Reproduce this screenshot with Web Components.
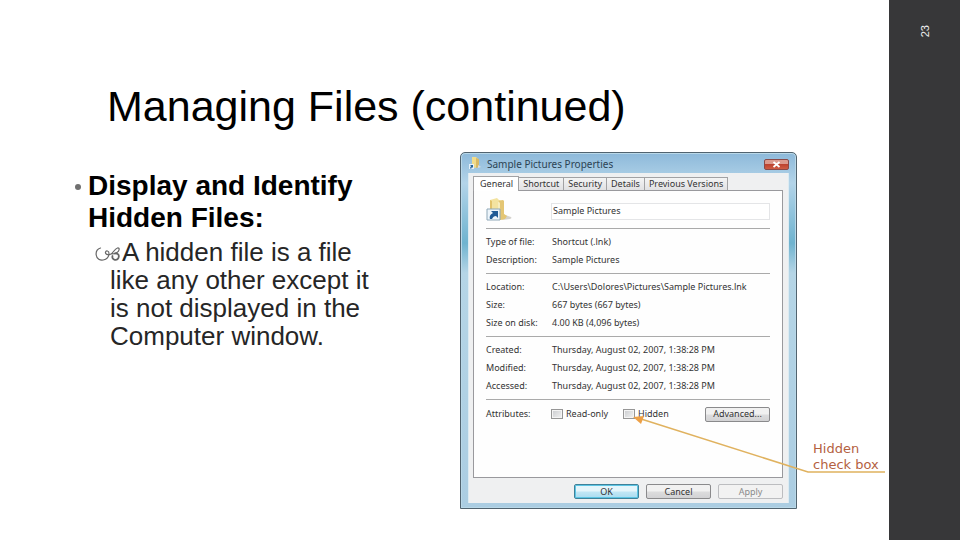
<!DOCTYPE html>
<html lang="en">
<head>
<meta charset="utf-8">
<meta name="viewport" content="width=device-width, initial-scale=1">
<title>Managing Files (continued)</title>
<style>
	body {
		margin: 0;
		background: white;
		color: black;
		font-family: "Liberation Sans", Arial, sans-serif;
	}
</style>
</head>
<body>

<slide-page number="23">
	<h1 slot="title">Managing Files (continued)</h1>
	<slide-point slot="text">
		Display and Identify Hidden Files:
		<span slot="detail">A hidden file is a file like any other except it is not displayed in the Computer window.</span>
	</slide-point>
	<callout-figure slot="figure">
		<properties-window heading="Sample Pictures Properties">
			<property-group>
				<property-row label="Type of file:">Shortcut (.lnk)</property-row>
				<property-row label="Description:">Sample Pictures</property-row>
			</property-group>
			<property-group>
				<property-row label="Location:">C:\Users\Dolores\Pictures\Sample Pictures.lnk</property-row>
				<property-row label="Size:">667 bytes (667 bytes)</property-row>
				<property-row label="Size on disk:">4.00 KB (4,096 bytes)</property-row>
			</property-group>
			<property-group>
				<property-row label="Created:">Thursday, August 02, 2007, 1:38:28 PM</property-row>
				<property-row label="Modified:">Thursday, August 02, 2007, 1:38:28 PM</property-row>
				<property-row label="Accessed:">Thursday, August 02, 2007, 1:38:28 PM</property-row>
			</property-group>
			<property-row label="Attributes:" controls>
				<check-option>Read-only</check-option>
				<check-option>Hidden</check-option>
				<win-button>Advanced...</win-button>
			</property-row>
			<win-button slot="actions" kind="default">OK</win-button>
			<win-button slot="actions">Cancel</win-button>
			<win-button slot="actions" disabled>Apply</win-button>
		</properties-window>
		<span slot="label">Hidden<br>check box</span>
	</callout-figure>
</slide-page>

<script>
const html = (strings, ...values) => String.raw(strings, ...values);

class BaseElement extends HTMLElement
{
	connectedCallback()
	{
		if (this.shadowRoot) return;
		this.attachShadow({mode: 'open'});
		this.shadowRoot.innerHTML = this.render();
	}
}

class SlidePage extends BaseElement
{
	render()
	{
		return html`
			<style>
				:host {
					display: grid;
					grid-template-columns: 1fr 71px;
					min-height: 100vh;
				}

				main {
					padding: 81px 0 31px 74px;
				}

				::slotted(h1) {
					margin: 0 0 21px 33px;
					font-size: 43px;
					font-weight: normal;
					line-height: 50px;
				}

				.columns {
					display: grid;
					grid-template-columns: 386fr 429fr;
					align-items: start;
				}

				.text {
					padding: 18px 84px 0 0;
				}

				aside {
					display: flex;
					justify-content: center;
					align-items: flex-start;
					padding-top: 25px;
					background: #373739;
					color: #eee;
					font-size: 11px;
				}

				aside span {
					writing-mode: vertical-rl;
					transform: rotate(180deg);
				}
			</style>
			<main>
				<slot name="title"></slot>
				<div class="columns">
					<div class="text"><slot name="text"></slot></div>
					<slot name="figure"></slot>
				</div>
			</main>
			<aside><span>${ this.getAttribute('number') }</span></aside>
		`;
	}
}

class SlidePoint extends BaseElement
{
	render()
	{
		return html`
			<style>
				:host {
					display: block;
				}

				.point {
					display: grid;
					grid-template-columns: 8px 1fr;
					column-gap: 6px;
					font-size: 28px;
					font-weight: bold;
					line-height: 32px;
				}

				.dot {
					width: 6px;
					height: 6px;
					margin: 14px 0 0 1px;
					border-radius: 50%;
					background: #707070;
				}

				.detail {
					padding: 4px 0 0 36px;
					color: #262626;
					font-size: 26px;
					line-height: 28px;
					text-indent: -15px;
				}

				svg {
					width: 27px;
					height: 16px;
					vertical-align: -1px;
				}
			</style>
			<div class="point">
				<div class="dot"></div>
				<div><slot></slot></div>
			</div>
			<div class="detail"><svg viewBox="0 0 27 16" fill="none" stroke="#666" stroke-width="1.2" stroke-linecap="round" aria-hidden="true">
				<path d="M5.500 2C2.500 3 .8 6 1.200 9c.5 4 4 5.600 7 5 4-.8 5.800-3.500 5.800-6.500 0-3-3-3.300-3.500-1.300-.4 2 2.300 3 4.500 2.300C18.500 7.500 19 3 22.500 2c2.500-.5 2 3-.5 4.500-1.500 1-3.500 1.500-5 1.500"/>
				<path d="M20 7.500c2.500-.3 4 1 3.800 3.200-.2 2.300-2 3.500-4 3.100-2-.4-2.800-2-2.300-3.800" stroke-width="1.800"/>
			</svg><slot name="detail"></slot></div>
		`;
	}
}

class CalloutFigure extends BaseElement
{
	render()
	{
		return html`
			<style>
				:host {
					position: relative;
					display: grid;
					grid-template-columns: 337fr 92fr;
				}

				.label {
					padding: 289px 0 0 16px;
					color: #b4613f;
					font: 13px/16px "DejaVu Sans", Verdana, sans-serif;
					white-space: nowrap;
				}

				svg {
					position: absolute;
					inset: 0;
					width: 100%;
					height: 100%;
					pointer-events: none;
				}
			</style>
			<slot></slot>
			<div class="label"><slot name="label"></slot></div>
			<svg viewBox="0 0 429 357" preserveAspectRatio="xMinYMin" aria-hidden="true">
				<path d="M178 266L348 320H425" fill="none" stroke="#e0b25f" stroke-width="1.600"/>
				<path d="M173 265l11-1-3 8z" fill="#eda046"/>
			</svg>
		`;
	}
}

class PropertiesWindow extends BaseElement
{
	render()
	{
		const tabs = ['General', 'Shortcut', 'Security', 'Details', 'Previous Versions'];
		return html`
			<style>
				:host {
					display: block;
					box-sizing: border-box;
					padding: 0 7px 5px;
					border: 1px solid #51636f;
					border-radius: 5px 5px 0 0;
					background: linear-gradient(#8db9da, #b3d4e9 30px, #6fb3cf 90px, #b5d5e6 120px, #abcde2);
					box-shadow: inset 0 0 0 1px #b9d8e8;
					color: #333;
					font: 9px/18px "Noto Sans", sans-serif;
				}

				header {
					display: flex;
					align-items: center;
					gap: 5px;
					height: 20px;
				}

				header svg {
					width: 14px;
					height: 14px;
				}

				header span {
					flex: 1;
					padding-top: 2px;
					color: #2c4353;
					font-size: 10px;
				}

				.close {
					display: grid;
					place-items: center;
					width: 25px;
					height: 11px;
					margin-top: 3px;
					padding: 0;
					border: 1px solid #8b4a49;
					border-radius: 2px;
					background: linear-gradient(#dc9a8e 45%, #bd4330 50%, #cf5c44);
				}

				.close svg {
					width: 9px;
					height: 7px;
				}

				.client {
					padding: 3px 5px 4px 4px;
					border: 1px solid #dcebf2;
					border-width: 0 1px;
					background: #eff0f1;
				}

				.tabs {
					display: flex;
					align-items: flex-end;
				}

				.tabs button {
					height: 13px;
					padding: 0 4px;
					border: 1px solid #a2a2a4;
					border-left-width: 0;
					border-bottom: 0;
					background: linear-gradient(#f4f4f4, #e1e1e3);
					color: inherit;
					font: inherit;
					line-height: 12px;
				}

				.tabs button[aria-selected=true] {
					position: relative;
					height: 15px;
					margin-bottom: -1px;
					padding: 0 5px 0 6px;
					border-left-width: 1px;
					background: white;
				}

				.panel {
					padding: 0 12px 54px;
					border: 1px solid #99999d;
					background: #fefefe;
				}

				.name {
					display: grid;
					grid-template-columns: 65px 1fr;
					align-items: center;
					height: 37px;
					border-bottom: 1px solid #aaa;
				}

				.name svg {
					width: 27px;
					height: 25px;
				}

				.name input {
					box-sizing: border-box;
					width: 100%;
					min-width: 0;
					height: 17px;
					margin-top: 3px;
					padding: 0 1px;
					border: 1px solid #e4e5e7;
					background: white;
					color: inherit;
					font: inherit;
				}

				footer {
					display: flex;
					justify-content: flex-end;
					gap: 7px;
					padding-top: 6px;
				}
			</style>
			<header>
				<svg viewBox="0 0 14 14" aria-hidden="true">
					<path d="M4 1h4l2 2v8l-4 1-2-1z" fill="#f0dc8c"/>
					<path d="M8 2l3 1v8l-3 1z" fill="#d8b965"/>
					<path d="M10 9l3 2-3 1z" fill="#d9dde0"/>
					<path d="M1 8h5v5H1z" fill="#e6f0f8"/>
					<path d="M2 12l1-2-1-1h3v3L4 11l-1 2z" fill="#2a6699"/>
				</svg>
				<span>${ this.getAttribute('heading') }</span>
				<button class="close" type="button" aria-label="Close">
					<svg viewBox="0 0 9 7" aria-hidden="true"><path d="M1.500 1l6 5M7.500 1l-6 5" stroke="#fff" stroke-width="1.800"/></svg>
				</button>
			</header>
			<div class="client">
				<div class="tabs" role="tablist">
					${ tabs.map((tab, i) => `<button type="button" role="tab" aria-selected="${ i == 0 }">${ tab }</button>`).join('') }
				</div>
				<div class="panel" role="tabpanel">
					<div class="name">
						<svg viewBox="0 0 27 25" aria-hidden="true">
							<path d="M17 17l8 3c1 1 0 2-1 2l-8 1z" fill="#d4d2cd"/>
							<path d="M4 3l7-2 2 2 5 1v18l-4 1-10-6z" fill="#f3e3a0"/>
							<path d="M4 3l2 1v11H4z" fill="#e2c36b"/>
							<path d="M12 4l5-1 1 1v13l3 2-2 3-5 1-2-5z" fill="#e4c674"/>
							<path d="M12 4l2 2v16l-2-4z" fill="#f7edbd"/>
							<path d="M1 12h13v11H1z" fill="#edf5fb" stroke="#8fa8b8"/>
							<path d="M12 14v7l-2-2c-2 0-3 1-4 3H4c-1-3 1-5 3-6l-2-2z" fill="#205b96"/>
						</svg>
						<input type="text" value="Sample Pictures" aria-label="Name">
					</div>
					<slot></slot>
				</div>
				<footer><slot name="actions"></slot></footer>
			</div>
		`;
	}
}

class PropertyGroup extends BaseElement
{
	render()
	{
		return html`
			<style>
				:host {
					display: block;
					padding: 4px 0;
					border-bottom: 1px solid #aaa;
				}
			</style>
			<slot></slot>
		`;
	}
}

class PropertyRow extends BaseElement
{
	render()
	{
		return html`
			<style>
				:host {
					display: grid;
					grid-template-columns: 65px 1fr;
				}

				:host([controls]) {
					padding-top: 5px;
				}

				.value {
					display: flex;
					align-items: center;
					padding-left: 1px;
					white-space: nowrap;
				}

				:host([controls]) .value {
					padding-left: 0;
				}

				::slotted(check-option) {
					flex: none;
					width: 72px;
				}

				::slotted(win-button) {
					margin-left: auto;
				}
			</style>
			<span>${ this.getAttribute('label') }</span>
			<div class="value"><slot></slot></div>
		`;
	}
}

class CheckOption extends BaseElement
{
	render()
	{
		return html`
			<style>
				:host {
					display: block;
				}

				label {
					display: flex;
					align-items: center;
					gap: 3px;
				}

				input {
					appearance: none;
					box-sizing: border-box;
					width: 12px;
					height: 10px;
					margin: 0;
					border: 1px solid #969696;
					background: linear-gradient(135deg, #c9cbce, #f3f3f3);
					box-shadow: inset 0 0 0 1px #f4f4f4;
				}
			</style>
			<label><input type="checkbox"><slot></slot></label>
		`;
	}
}

class WinButton extends BaseElement
{
	render()
	{
		return html`
			<style>
				:host {
					display: block;
					width: 65px;
				}

				button {
					display: block;
					box-sizing: border-box;
					width: 100%;
					height: 15px;
					padding: 0;
					border: 1px solid #8a8a8c;
					border-radius: 2px;
					background: linear-gradient(#f1f1f1 45%, #dcdcdd 55%, #d2d2d4);
					color: #333;
					font: inherit;
					line-height: 12px;
				}

				:host([kind=default]) button {
					border-color: #3f8199;
					background: linear-gradient(#e4f5fb 45%, #c0e6f5 55%, #a9dcf0);
					box-shadow: inset 0 0 0 1px #5cc5e4;
				}

				:host([disabled]) button {
					border-color: #bcbdc0;
					background: #f2f2f2;
					color: #8b8b8b;
				}
			</style>
			<button type="button" ${ this.hasAttribute('disabled') ? 'disabled' : '' }><slot></slot></button>
		`;
	}
}

window.customElements.define('slide-page', SlidePage);
window.customElements.define('slide-point', SlidePoint);
window.customElements.define('callout-figure', CalloutFigure);
window.customElements.define('properties-window', PropertiesWindow);
window.customElements.define('property-group', PropertyGroup);
window.customElements.define('property-row', PropertyRow);
window.customElements.define('check-option', CheckOption);
window.customElements.define('win-button', WinButton);
</script>
</body>
</html>
